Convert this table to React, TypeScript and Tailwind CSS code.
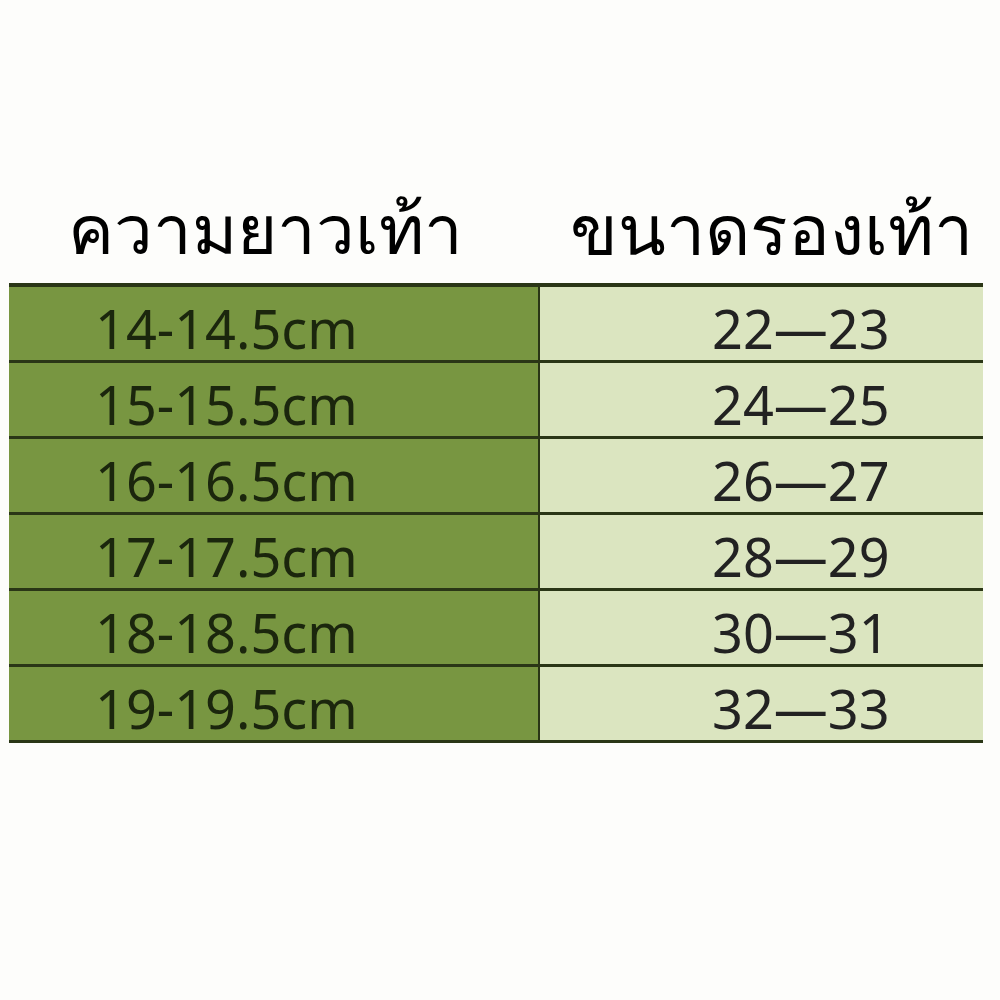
import React from "react";

const rows = [
  ["14-14.5cm", "22—23"],
  ["15-15.5cm", "24—25"],
  ["16-16.5cm", "26—27"],
  ["17-17.5cm", "28—29"],
  ["18-18.5cm", "30—31"],
  ["19-19.5cm", "32—33"],
];

export default function App() {
  return (
    <div
      className="w-[1000px] h-[1000px] bg-[#fdfdfb] relative"
      style={{ fontFamily: '"Noto Sans", "DejaVu Sans", sans-serif' }}
    >
      <div className="h-[180px]" />
      <div className="flex h-[103px] items-center pb-[8px]">
        <div className="w-[540px] pl-[68px] text-[69px] leading-none text-black">ความยาวเท้า</div>
        <div className="pl-[30px] text-[70px] leading-none text-black">ขนาดรองเท้า</div>
      </div>
      <div className="ml-[9px] w-[974px] flex border-t-4 border-[#2a3616]">
        <div className="w-[531px] bg-[#789641] border-r-2 border-[#2a3616]">
          {rows.map((r, i) => (
            <div
              key={i}
              className="h-[76px] border-b-[3px] border-[#2a3616] flex items-center pt-[8px] pl-[86px] text-[54px] text-[#1b260d] leading-none"
            >
              {r[0]}
            </div>
          ))}
        </div>
        <div className="flex-1 bg-[#dbe5c0]">
          {rows.map((r, i) => (
            <div
              key={i}
              className="h-[76px] border-b-[3px] border-[#2a3616] flex items-center pt-[8px] pl-[172px] text-[54px] text-[#222] leading-none"
            >
              {r[1]}
            </div>
          ))}
        </div>
      </div>
    </div>
  );
}
